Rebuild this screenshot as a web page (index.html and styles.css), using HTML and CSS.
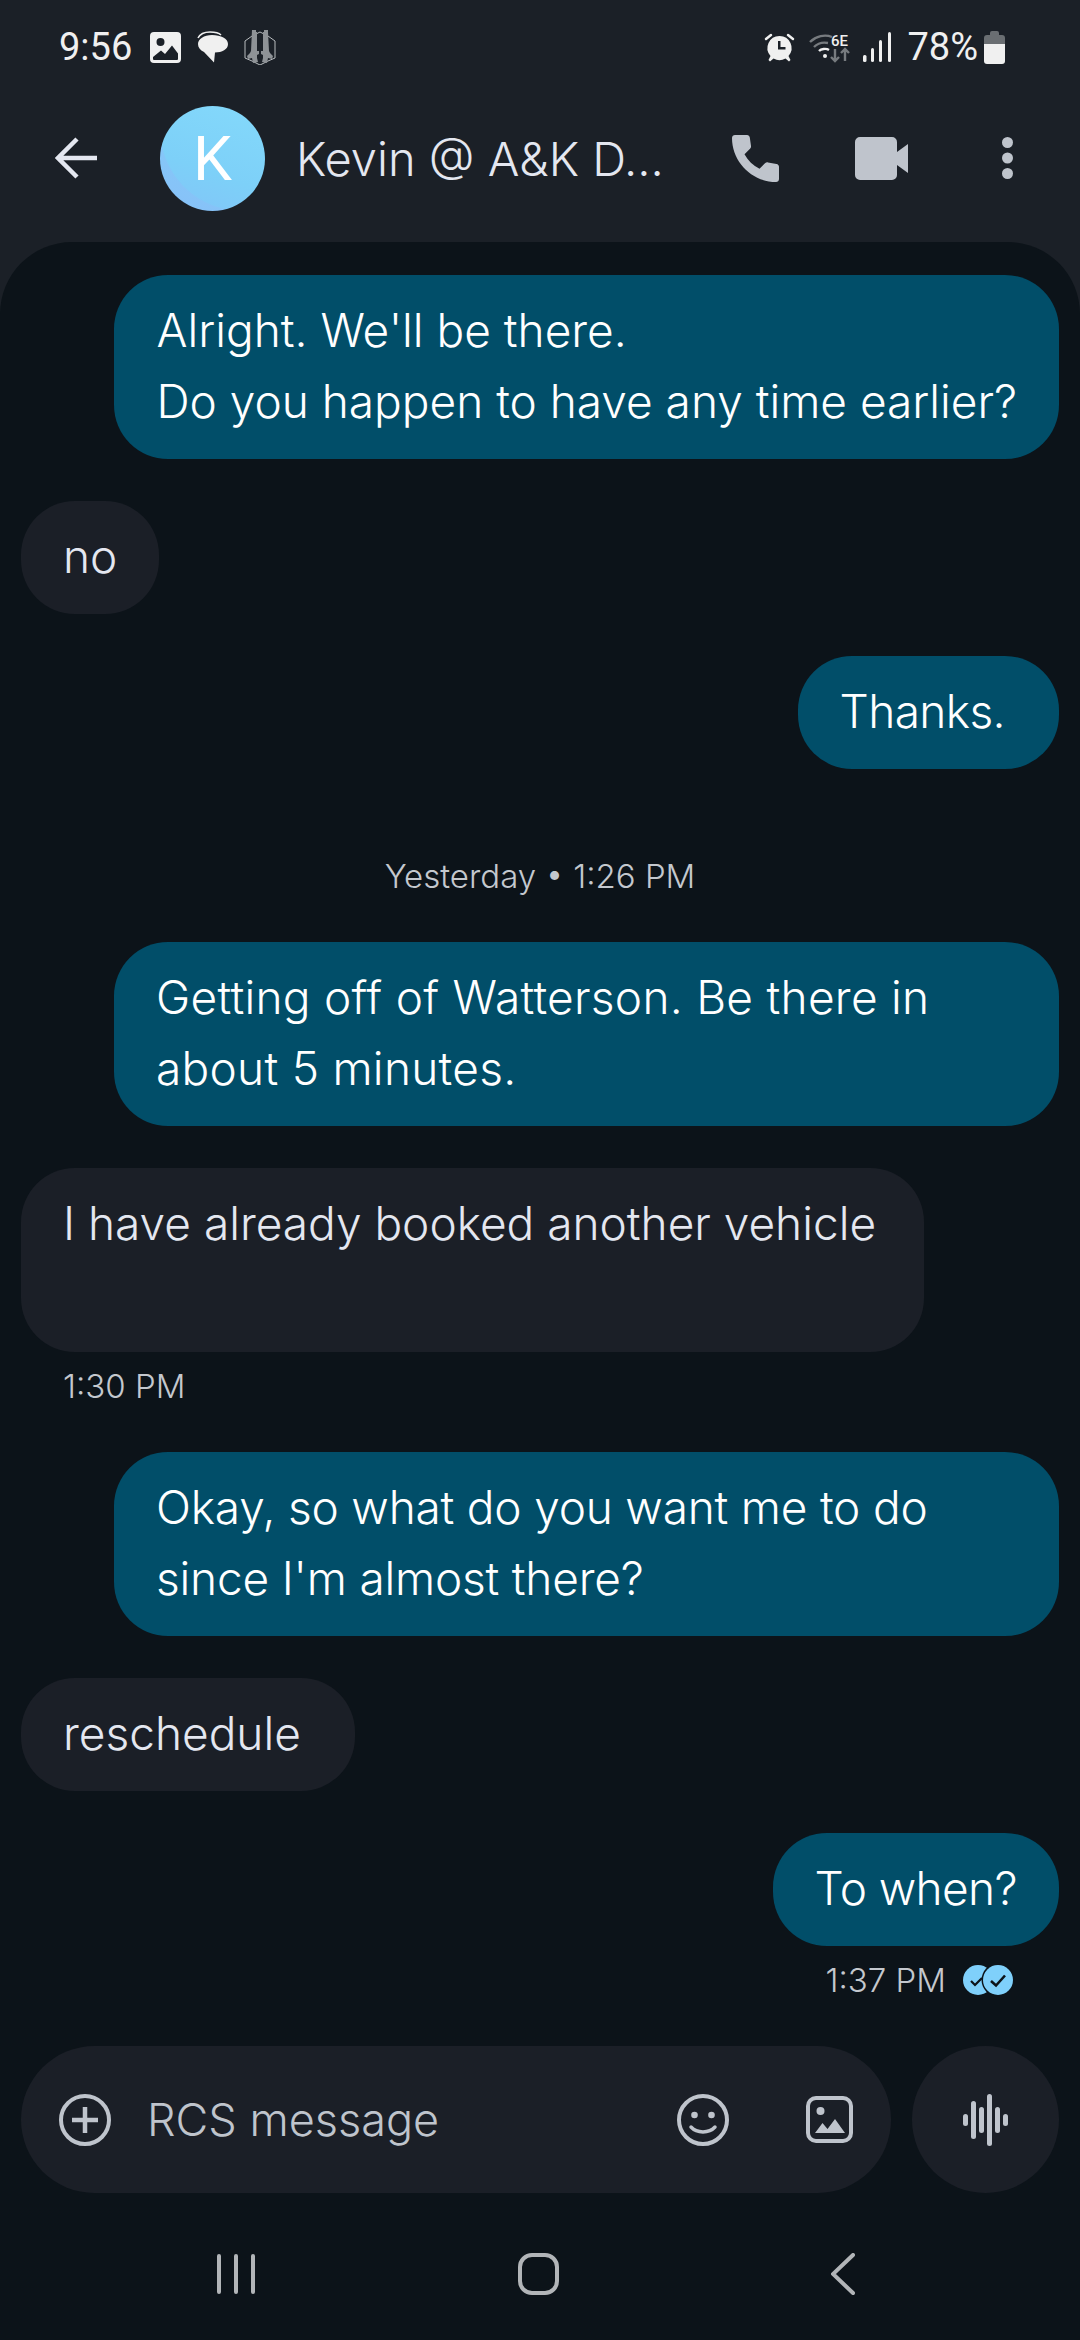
FILE: index.html
```html
<!DOCTYPE html>
<html lang="en">
<head>
    <meta charset="UTF-8">
    <meta name="viewport" content="width=device-width, initial-scale=1.0">
    <title>Messages</title>
    <link rel="stylesheet" href="styles.css">
</head>
<body>
    <div class="status">
        <div class="status-left">
            <span class="clock">9:56</span>
            <svg class="ic-photo" width="31" height="31" viewBox="0 0 31 31"><path fill="#f0f0f0" fill-rule="evenodd" d="M4 0h23a4 4 0 0 1 4 4v23a4 4 0 0 1-4 4H4a4 4 0 0 1-4-4V4a4 4 0 0 1 4-4zM3 25v2a1 1 0 0 0 1 1h23a1 1 0 0 0 1-1v-5.500l-6-8-7 8.500-4-3.500zM10.500 6a4 4 0 1 0 0 8 4 4 0 0 0 0-8z"/></svg>
            <svg class="ic-chat" width="31" height="32" viewBox="0 0 31 32"><path fill="none" stroke="#f0f0f0" stroke-width="1.500" d="M1 7c2-4 6-6 12-6 5 0 9 1 11 3"/><path fill="#f0f0f0" d="M15 4c9 0 16 3.500 16 9 0 5.500-6 8.500-13 8.500l-1 10L7 21C3 19 1 16.500 1 13c0-5 6-9 14-9z"/></svg>
            <svg class="ic-guns" width="32" height="36" viewBox="0 0 32 36"><path fill="none" stroke="#b9bcbf" stroke-width="1" d="M8 7 16 3l8 4 7 5v17l-7 3-8 4-8-4-7-3V12z"/><path fill="#8e9296" d="M8 1h4v2h1v19h2v3l-2 1v3l1 4-5 1-1-5-4 1-1-3 3-3 1-2zM20 1h4l0 2 1 19 1 2 3 3-1 3-4-1-1 5-5-1 1-4v-3l-2-1v-3h2V3h1z"/></svg>
        </div>
        <div class="status-right">
            <svg class="ic-alarm" width="31" height="30" viewBox="0 0 31 30"><path fill="#f0f0f0" fill-rule="evenodd" d="M15.500 4a12 12 0 0 1 9 20l2 4-1.500 1.500-3.500-3a12 12 0 0 1-12 0l-3.500 3L4.500 28l2-4a12 12 0 0 1 9-20zM14 9v8.500h7.500V15H16.500V9z"/><path fill="none" stroke="#f0f0f0" stroke-width="2.500" stroke-linecap="round" d="M2 7l5-4M29 7l-5-4"/></svg>
            <svg class="ic-wifi" width="42" height="31" viewBox="0 0 42 31"><path fill="none" stroke="#777b7f" stroke-width="2.400" d="M1 10c6-6 15-8 22-5"/><path fill="none" stroke="#777b7f" stroke-width="2.400" d="M5 15c4-4 9-5 14-4"/><path fill="none" stroke="#f0f0f0" stroke-width="2.400" d="M10 19c2-2 7-3 10-1"/><circle cx="16" cy="24" r="2" fill="#f0f0f0"/><text x="22" y="14" class="wifi-label">6E</text><path fill="none" stroke="#777b7f" stroke-width="2.400" d="M26 17v12m-4-4 4 4 4-4"/><path fill="none" stroke="#777b7f" stroke-width="2.400" d="M36 29V17m-4 4 4-4 4 4"/></svg>
            <svg class="ic-signal" width="28" height="30" viewBox="0 0 28 30"><rect x="0" y="23" width="3.500" height="7" rx="1.500" fill="#f0f0f0"/><rect x="8" y="16" width="3" height="14" rx="1.500" fill="#f0f0f0"/><rect x="16" y="8" width="3" height="22" rx="1.500" fill="#f0f0f0"/><rect x="25" y="0" width="3" height="30" rx="1.500" fill="#f0f0f0"/></svg>
            <span class="battery-pct">78%</span>
            <svg class="ic-battery" width="21" height="33" viewBox="0 0 21 33"><path fill="#6a6e72" d="M6 2a2 2 0 0 1 2-2h5a2 2 0 0 1 2 2v2h3a3 3 0 0 1 3 3v6H0V7a3 3 0 0 1 3-3h3z"/><path fill="#f0f0f0" d="M0 13h21v17a3 3 0 0 1-3 3H3a3 3 0 0 1-3-3z"/></svg>
        </div>
    </div>

    <div class="topbar">
        <svg class="ic-back" width="42" height="42" viewBox="0 0 42 42"><path fill="none" stroke="#e4e7f0" stroke-width="4.500" d="M42 21H3M22 2 3 21l19 19"/></svg>
        <div class="avatar">K</div>
        <div class="name">Kevin @ A&amp;K D...</div>
        <svg class="ic-phone" width="47" height="47" viewBox="0 0 47 47"><path fill="#bfc4cc" d="M3 0h12c1.500 0 2.500 1 2.800 2.500L19 11c.2 1-.2 2-1 2.800l-5.500 5.500c3.500 6.500 8.500 11 15 14.500l5.500-5.500c.8-.8 2-1.200 3-.9l8.500 1.600c1.400.3 2.500 1.300 2.500 2.700V44c0 1.700-1.300 3-3 3C20 47 0 27 0 3c0-1.700 1.300-3 3-3z"/></svg>
        <svg class="ic-video" width="53" height="43" viewBox="0 0 53 43"><path fill="#bfc4cc" d="M5 0h32a5 5 0 0 1 5 5v10l11-8v29l-11-8v10a5 5 0 0 1-5 5H5a5 5 0 0 1-5-5V5a5 5 0 0 1 5-5z"/></svg>
        <svg class="ic-more" width="11" height="42" viewBox="0 0 11 42"><circle cx="5.500" cy="5.500" r="5.500" fill="#bfc4cc"/><circle cx="5.500" cy="21" r="5.500" fill="#bfc4cc"/><circle cx="5.500" cy="36.500" r="5.500" fill="#bfc4cc"/></svg>
    </div>

    <div class="chat">
        <div class="bubble out">Alright. We'll be there.<br>Do you happen to have any time earlier?</div>
        <div class="bubble in">no</div>
        <div class="bubble out trail tight">Thanks.</div>

        <div class="stamp">Yesterday • 1:26 PM</div>

        <div class="bubble out wide loose">Getting off of Watterson. Be there in about 5 minutes.</div>
        <div class="bubble in booked">I have already booked another vehicle<br>&nbsp;</div>
        <div class="time in-time">1:30 PM</div>

        <div class="bubble out wide snug">Okay, so what do you want me to do since I'm almost there?</div>
        <div class="bubble in trail">reschedule</div>
        <div class="bubble out tight">To when?</div>
        <div class="time out-time">
            1:37 PM
            <svg class="ic-read" width="50" height="30" viewBox="0 0 50 30"><circle cx="15" cy="15" r="15" fill="#7fd0fb"/><path fill="none" stroke="#0c1319" stroke-width="2.200" d="M8 16l4 4 7-7"/><circle cx="35" cy="15" r="16.500" fill="#0c1319"/><circle cx="35" cy="15" r="15" fill="#7fd0fb"/><path fill="none" stroke="#0c1319" stroke-width="2.600" d="M28 16l5 4.500 9-10"/></svg>
        </div>

        <div class="composer">
            <div class="input">
                <svg class="ic-plus" width="52" height="52" viewBox="0 0 52 52"><circle cx="26" cy="26" r="24" fill="none" stroke="#bfc4cc" stroke-width="4"/><path fill="none" stroke="#bfc4cc" stroke-width="4.500" d="M26 13v26M13 26h26"/></svg>
                <span class="placeholder">RCS message</span>
                <svg class="ic-emoji" width="52" height="52" viewBox="0 0 52 52"><circle cx="26" cy="26" r="24" fill="none" stroke="#bfc4cc" stroke-width="4"/><circle cx="17.500" cy="21" r="3.300" fill="#bfc4cc"/><circle cx="34.500" cy="21" r="3.300" fill="#bfc4cc"/><path fill="none" stroke="#bfc4cc" stroke-width="3.500" stroke-linecap="round" d="M14 33c6 6.500 18 6.500 24 0"/></svg>
                <svg class="ic-image" width="47" height="47" viewBox="0 0 47 47"><rect x="2" y="2" width="43" height="43" rx="8" fill="none" stroke="#bfc4cc" stroke-width="4"/><circle cx="14.500" cy="15" r="4" fill="#bfc4cc"/><path fill="#bfc4cc" d="M9 37l7.500-10 5 6 7.500-10 10 14z"/></svg>
            </div>
            <div class="mic">
                <svg width="45" height="54" viewBox="0 0 45 54"><rect x="0" y="21" width="5" height="12" rx="2.500" fill="#bfc4cc"/><rect x="8" y="8" width="5" height="38" rx="2.500" fill="#bfc4cc"/><rect x="16" y="14" width="5" height="26" rx="2.500" fill="#bfc4cc"/><rect x="24" y="1" width="5" height="52" rx="2.500" fill="#bfc4cc"/><rect x="32" y="14" width="5" height="26" rx="2.500" fill="#bfc4cc"/><rect x="40" y="21" width="5" height="12" rx="2.500" fill="#bfc4cc"/></svg>
            </div>
        </div>

        <div class="navbar">
            <svg class="nav-recent" width="38" height="40" viewBox="0 0 38 40"><path fill="none" stroke="#b2b5b8" stroke-width="4" stroke-linecap="round" d="M2 2v36M19 2v36M36 2v36"/></svg>
            <svg class="nav-home" width="41" height="42" viewBox="0 0 41 42"><rect x="2" y="2" width="37" height="38" rx="12" fill="none" stroke="#b2b5b8" stroke-width="4"/></svg>
            <svg class="nav-back" width="24" height="42" viewBox="0 0 24 42"><path fill="none" stroke="#b2b5b8" stroke-width="4" stroke-linecap="round" d="M22 2 2 21l20 19"/></svg>
        </div>
    </div>
</body>
</html>
```

FILE: styles.css
```css
* {
    box-sizing: border-box;
}

body {
    margin: 0;
    width: 1080px;
    height: 2340px;
    overflow: hidden;
    background-color: #1b2027;
    font-family: Inter, Roboto, sans-serif;
    font-weight: 300;
    display: flex;
    flex-direction: column;
}

svg {
    display: block;
    flex: none;
}

/* status bar */
.status {
    flex: none;
    height: 94px;
    padding: 0 75px 0 59px;
    display: flex;
    justify-content: space-between;
    align-items: center;
    color: #f0f0f0;
    font-family: Roboto, sans-serif;
    font-weight: 400;
    font-size: 38px;
}

.status-left,
.status-right {
    display: flex;
    align-items: center;
}

.clock {
    margin-right: 18px;
}

.ic-chat {
    margin-left: 16px;
}

.ic-guns {
    margin-left: 16px;
}

.ic-wifi {
    margin-left: 14px;
}

.wifi-label {
    font-size: 15px;
    font-weight: 500;
    fill: #f0f0f0;
}

.ic-signal {
    margin-left: 12px;
}

.battery-pct {
    margin-left: 16px;
}

.ic-battery {
    margin-left: 6px;
}

/* title row */
.topbar {
    flex: none;
    height: 148px;
    padding: 0 68px 20px 55px;
    display: flex;
    align-items: center;
}

.avatar {
    width: 105px;
    height: 105px;
    margin-left: 63px;
    flex: none;
    border-radius: 50%;
    background:
        radial-gradient(circle at 78% 22%, transparent 0 70%, rgba(140, 190, 248, 0.55) 71%),
        linear-gradient(200deg, #84d9fb 0%, #7dd0f8 60%, #82c4f8 100%);
    color: white;
    font-family: Roboto, sans-serif;
    font-size: 62px;
    font-weight: 400;
    display: flex;
    justify-content: center;
    align-items: center;
}

.name {
    width: 436px;
    margin-left: 31px;
    flex: none;
    color: #e4e7f0;
    font-size: 47px;
    white-space: nowrap;
}

.ic-video {
    margin-left: 76px;
}

.ic-more {
    margin-left: 94px;
}

/* conversation */
.chat {
    flex: none;
    height: 2098px;
    padding: 33px 21px 0;
    background-color: #0c1319;
    border-radius: 72px 72px 0 0;
    display: flex;
    flex-direction: column;
    align-items: flex-start;
}

.bubble {
    flex: none;
    max-width: 945px;
    margin-bottom: 42px;
    padding: 20px 42px 22px;
    border-radius: 54px;
    font-size: 46px;
    line-height: 71px;
}

.bubble.out {
    align-self: flex-end;
    background-color: #014e69;
    color: white;
}

.bubble.in {
    background-color: #1b1f27;
    color: #e4e7f0;
}

.bubble.wide {
    width: 945px;
}

.bubble.trail {
    padding-right: 54px;
}

.bubble.booked {
    width: 903px;
    white-space: nowrap;
}

.tight {
    letter-spacing: -0.6px;
}

.snug {
    letter-spacing: -0.2px;
}

.loose {
    letter-spacing: 0.28px;
}

.stamp {
    align-self: center;
    margin: 40px 0 41px;
    color: #c4c8ce;
    font-size: 33px;
    line-height: 50px;
}

.time {
    margin: -31px 0 43px;
    color: #c4c8ce;
    font-size: 33px;
    line-height: 46px;
}

.in-time {
    margin-left: 42px;
}

.out-time {
    align-self: flex-end;
    margin-right: 46px;
    display: flex;
    align-items: center;
    gap: 17px;
}

/* message box */
.composer {
    flex: none;
    width: 100%;
    display: flex;
    justify-content: space-between;
}

.input {
    width: 870px;
    height: 147px;
    padding: 0 38px;
    background-color: #1b1f27;
    border-radius: 74px;
    display: flex;
    align-items: center;
}

.placeholder {
    margin-left: 36px;
    flex: 1;
    color: #bfc4cc;
    font-size: 45px;
}

.ic-image {
    margin-left: 77px;
}

.mic {
    width: 147px;
    height: 147px;
    background-color: #1b1f27;
    border-radius: 50%;
    display: flex;
    justify-content: center;
    align-items: center;
}

/* system navigation */
.navbar {
    flex: none;
    width: 100%;
    padding: 60px 0 0 196px;
    display: flex;
    align-items: center;
}

.nav-home {
    margin-left: 263px;
}

.nav-back {
    margin-left: 272px;
}
```
